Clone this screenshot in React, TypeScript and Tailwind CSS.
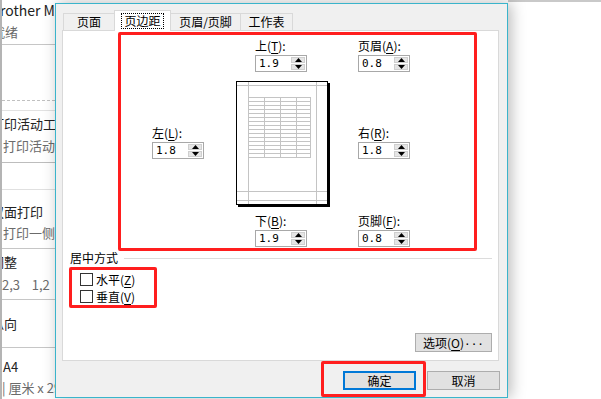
const red = 'border-[3px] border-[#ff1e1e] rounded-[2px]';
const mono = "font-['DejaVu_Sans_Mono',monospace]";

function U({ children }: { children: string }) {
  return <span className="underline underline-offset-[2px]">{children}</span>;
}

function Arrow({ up }: { up?: boolean }) {
  return (
    <div className="flex flex-1 items-center justify-center border border-[#cfcfcf] bg-[#e5e5e5]">
      <svg width="7" height="4" viewBox="0 0 7 4">
        <path d={up ? 'M3.5 0L7 4H0z' : 'M0 0h7L3.5 4z'} fill="#000" />
      </svg>
    </div>
  );
}

function Spinner({ value }: { value: string }) {
  return (
    <div className="flex h-[17px] w-[52px] border border-[#a8a8a8] bg-white">
      <span className={`flex-1 pl-[3px] text-[11px] leading-[15px] text-black ${mono}`}>{value}</span>
      <div className="flex w-[16px] flex-col gap-px p-px">
        <Arrow up />
        <Arrow />
      </div>
    </div>
  );
}

function Field({ label, hot, value, className = '' }: { label: string; hot: string; value: string; className?: string }) {
  return (
    <div className={`flex w-[52px] flex-col gap-[2px] ${className}`}>
      <div className="h-[14px] whitespace-nowrap text-[12px] leading-[14px]">
        {label}(<U>{hot}</U>):
      </div>
      <Spinner value={value} />
    </div>
  );
}

function Preview() {
  const rows = Array.from({ length: 16 }, (_, i) => 16.5 + i * 4);
  return (
    <svg width="94" height="127" viewBox="0 0 94 127" className="shrink-0">
      <rect x="0.5" y="0.5" width="91" height="123" fill="#fff" stroke="#000" />
      <rect x="92" y="2" width="2" height="124" fill="#000" />
      <rect x="2" y="124" width="92" height="2" fill="#000" />
      <g stroke="#c4c4c4" strokeWidth="1">
        <line x1="12.5" y1="1" x2="12.5" y2="123" />
        <line x1="80.5" y1="1" x2="80.5" y2="123" />
        <line x1="1" y1="4.5" x2="91" y2="4.5" />
        <line x1="1" y1="110.5" x2="91" y2="110.5" />
        <line x1="1" y1="119.5" x2="91" y2="119.5" />
        {rows.map((y) => (
          <line key={y} x1="12" y1={y} x2="74" y2={y} />
        ))}
        {[28.5, 44.5, 60.5, 74.5].map((x) => (
          <line key={x} x1={x} y1="16" x2={x} y2="77" />
        ))}
      </g>
    </svg>
  );
}

function Sidebar() {
  const line = 'h-px shrink-0 bg-[#c6c6c6]';
  return (
    <div className="flex h-[399px] w-[55px] shrink-0 flex-col overflow-hidden border-l-2 border-[#b4b4b4] bg-white text-[13px] whitespace-nowrap text-[#222]">
      <div className="flex h-[20px] items-center -ml-[2px] text-[14px]">rother MFC</div>
      <div className="flex h-[24px] items-center -ml-[10px] text-[#6b6b6b]">就绪</div>
      <div className={line} />
      <div className="h-[55px]" />
      <div className="h-[10px] border-t border-dashed border-[#c0c0c0]" />
      <div className="h-px bg-[#e2e2e2]" />
      <div className="flex h-[26px] items-center -ml-[11px]">打印活动工作</div>
      <div className="flex h-[18px] items-center pl-px text-[#6b6b6b]">打印活动</div>
      <div className="h-[7px]" />
      <div className="h-px bg-[#bdbdbd]" />
      <div className="h-[26px]" />
      <div className="h-px bg-[#e0e0e0]" />
      <div className="h-[12px]" />
      <div className="flex h-[20px] items-center -ml-[11px]">双面打印</div>
      <div className="flex h-[22px] items-center pl-px text-[#6b6b6b]">打印一侧</div>
      <div className="h-[4px]" />
      <div className={line} />
      <div className="h-[2px]" />
      <div className="flex h-[22px] items-center -ml-[11px]">调整</div>
      <div className="flex h-[24px] items-center text-[#6b6b6b]">2,3&nbsp;&nbsp;&nbsp;&nbsp;1,2</div>
      <div className="h-[2px]" />
      <div className={line} />
      <div className="flex h-[47px] items-center -ml-[11px]">纵向</div>
      <div className={line} />
      <div className="h-[8px]" />
      <div className="flex h-[21px] items-center pl-px">A4</div>
      <div className="flex h-[21px] items-center text-[#6b6b6b]">| 厘米 x 29</div>
    </div>
  );
}

function Tabs() {
  const tab = 'flex h-[17px] items-center justify-center border-t border-[#d9d9d9] bg-[#f0f0f0] text-[12px]';
  return (
    <div className="flex h-[26px] items-end pl-[7px]">
      <div className={`${tab} w-[51px] border-l`}>页面</div>
      <div className="relative z-10 -mb-px flex h-[21px] w-[57px] items-start justify-center border border-b-0 border-[#d9d9d9] bg-white pt-[2px] text-[12px]">
        <span className="border border-dotted border-black px-[2px] leading-[14px]">页边距</span>
      </div>
      <div className={`${tab} w-[70px] border-r`}>页眉/页脚</div>
      <div className={`${tab} w-[52px] border-r`}>工作表</div>
    </div>
  );
}

function Dialog() {
  const btn = 'flex h-[19px] w-[73px] items-center justify-center bg-[#e1e1e1] text-[12px]';
  return (
    <div className="relative z-10 mt-[3px] flex h-[395px] w-[453px] shrink-0 flex-col border border-[#3ab4cb] bg-[#f0f0f0] shadow-[3px_0_14px_rgba(0,0,0,0.28)]">
      <Tabs />
      <div className="ml-[6px] flex h-[331px] w-[437px] flex-col border border-[#d9d9d9] bg-white">
        <div className={`ml-[55px] mt-px flex h-[219px] w-[359px] flex-col ${red}`}>
          <div className="flex pl-[134px] pt-[4px]">
            <Field label="上" hot="T" value="1.9" />
            <Field label="页眉" hot="A" value="0.8" className="ml-[51px]" />
          </div>
          <div className="mt-[9px] flex items-start pl-[31px]">
            <Field label="左" hot="L" value="1.8" className="mt-[45px]" />
            <div className="ml-[32px]">
              <Preview />
            </div>
            <Field label="右" hot="R" value="1.8" className="ml-[28px] mt-[45px]" />
          </div>
          <div className="mt-[6px] flex pl-[134px]">
            <Field label="下" hot="B" value="1.9" />
            <Field label="页脚" hot="F" value="0.8" className="ml-[51px]" />
          </div>
        </div>
        <div className="flex h-[14px] items-center pl-[7px] pr-[6px] text-[12px] leading-[14px]">
          <span>居中方式</span>
          <div className="ml-[6px] h-px flex-1 bg-[#dcdcdc]" />
        </div>
        <div className={`ml-[6px] mt-[2px] flex h-[41px] w-[88px] flex-col gap-[4px] pl-[8px] pt-[3px] ${red}`}>
          {[
            ['水平', 'Z'],
            ['垂直', 'V'],
          ].map(([t, k]) => (
            <div key={k} className="flex h-[13px] items-center gap-[3px] text-[12px]">
              <div className="h-[13px] w-[13px] shrink-0 border border-[#333] bg-white" />
              <span className="whitespace-nowrap leading-[13px]">
                {t}(<U>{k}</U>)
              </span>
            </div>
          ))}
        </div>
        <div className={`mb-[8px] mr-[6px] mt-auto self-end ${btn} w-[77px] border border-[#adadad]`}>
          选项(<U>O</U>)<span className={`${mono} text-[11px]`}>...</span>
        </div>
      </div>
      <div className="ml-[265px] flex items-start">
        <div className={`h-[36px] w-[105px] pl-[19px] pt-[7px] ${red}`}>
          <div className={`${btn} border-2 border-[#0078d7]`}>确定</div>
        </div>
        <div className={`${btn} ml-px mt-[10px] border border-[#adadad]`}>取消</div>
      </div>
    </div>
  );
}

export default function App() {
  return (
    <div className="flex h-[399px] w-[601px] overflow-hidden bg-white font-['Noto_Sans_CJK_SC',sans-serif] text-black">
      <Sidebar />
      <Dialog />
      <div className="h-[399px] flex-1 border-t-2 border-[#c9c9c9] bg-white" />
    </div>
  );
}
